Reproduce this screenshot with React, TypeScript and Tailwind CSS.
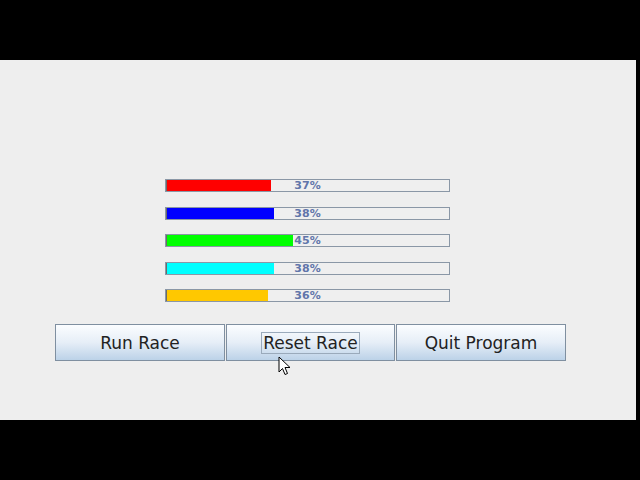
import React from 'react';

const racers = [
  { color: 'bg-[#ff0000]', pct: 37 },
  { color: 'bg-[#0000ff]', pct: 38 },
  { color: 'bg-[#00ff00]', pct: 45 },
  { color: 'bg-[#00ffff]', pct: 38 },
  { color: 'bg-[#ffc800]', pct: 36 },
];

function RaceBar({ color, pct }: { color: string; pct: number }) {
  return (
    <div className="relative h-[13px] w-[285px] border border-[#8a97a6] bg-[#efefef]">
      <div className={`h-full ${color} border-l border-[#6b6b6b]`} style={{ width: `${pct}%` }} />
      <span
        className="absolute inset-0 flex items-center justify-center text-[11px] font-bold leading-none text-[#6175aa]"
        style={{ fontFamily: '"DejaVu Sans", sans-serif' }}
      >
        {pct}%
      </span>
    </div>
  );
}

function RaceButton({ label, width, focused }: { label: string; width: string; focused?: boolean }) {
  return (
    <button
      className={`${width} h-[37px] border border-[#7f8fa0] bg-gradient-to-b from-[#fbfdff] via-[#e6eef7] to-[#bcd2e8] text-[17px] text-[#222222] flex items-center justify-center`}
      style={{ fontFamily: '"DejaVu Sans", sans-serif' }}
    >
      <span className={focused ? 'border border-[#9aaabb] px-[1px] leading-[20px]' : 'leading-[20px]'}>{label}</span>
    </button>
  );
}

export default function App() {
  return (
    <div className="w-[640px] h-[480px] bg-black overflow-hidden pt-[60px]">
      <div className="relative w-[636px] h-[360px] bg-[#eeeeee] pt-[119px]">
        <div className="ml-[165px] flex flex-col gap-[14.5px]">
          {racers.map((r, i) => (
            <RaceBar key={i} color={r.color} pct={r.pct} />
          ))}
        </div>

        <div className="ml-[55px] mt-[22px] flex gap-px">
          <RaceButton label="Run Race" width="w-[170px]" />
          <RaceButton label="Reset Race" width="w-[169px]" focused />
          <RaceButton label="Quit Program" width="w-[170px]" />
        </div>

        {/* mouse pointer */}
        <svg className="absolute left-[278px] top-[296px]" width="14" height="20" viewBox="0 0 14 20">
          <path d="M1 1 L1 16 L4.5 12.5 L7 18.5 L9.5 17.5 L7 11.5 L12 11.5 Z" fill="#ffffff" stroke="#000000" strokeWidth="1" strokeLinejoin="round" />
        </svg>
      </div>
    </div>
  );
}
